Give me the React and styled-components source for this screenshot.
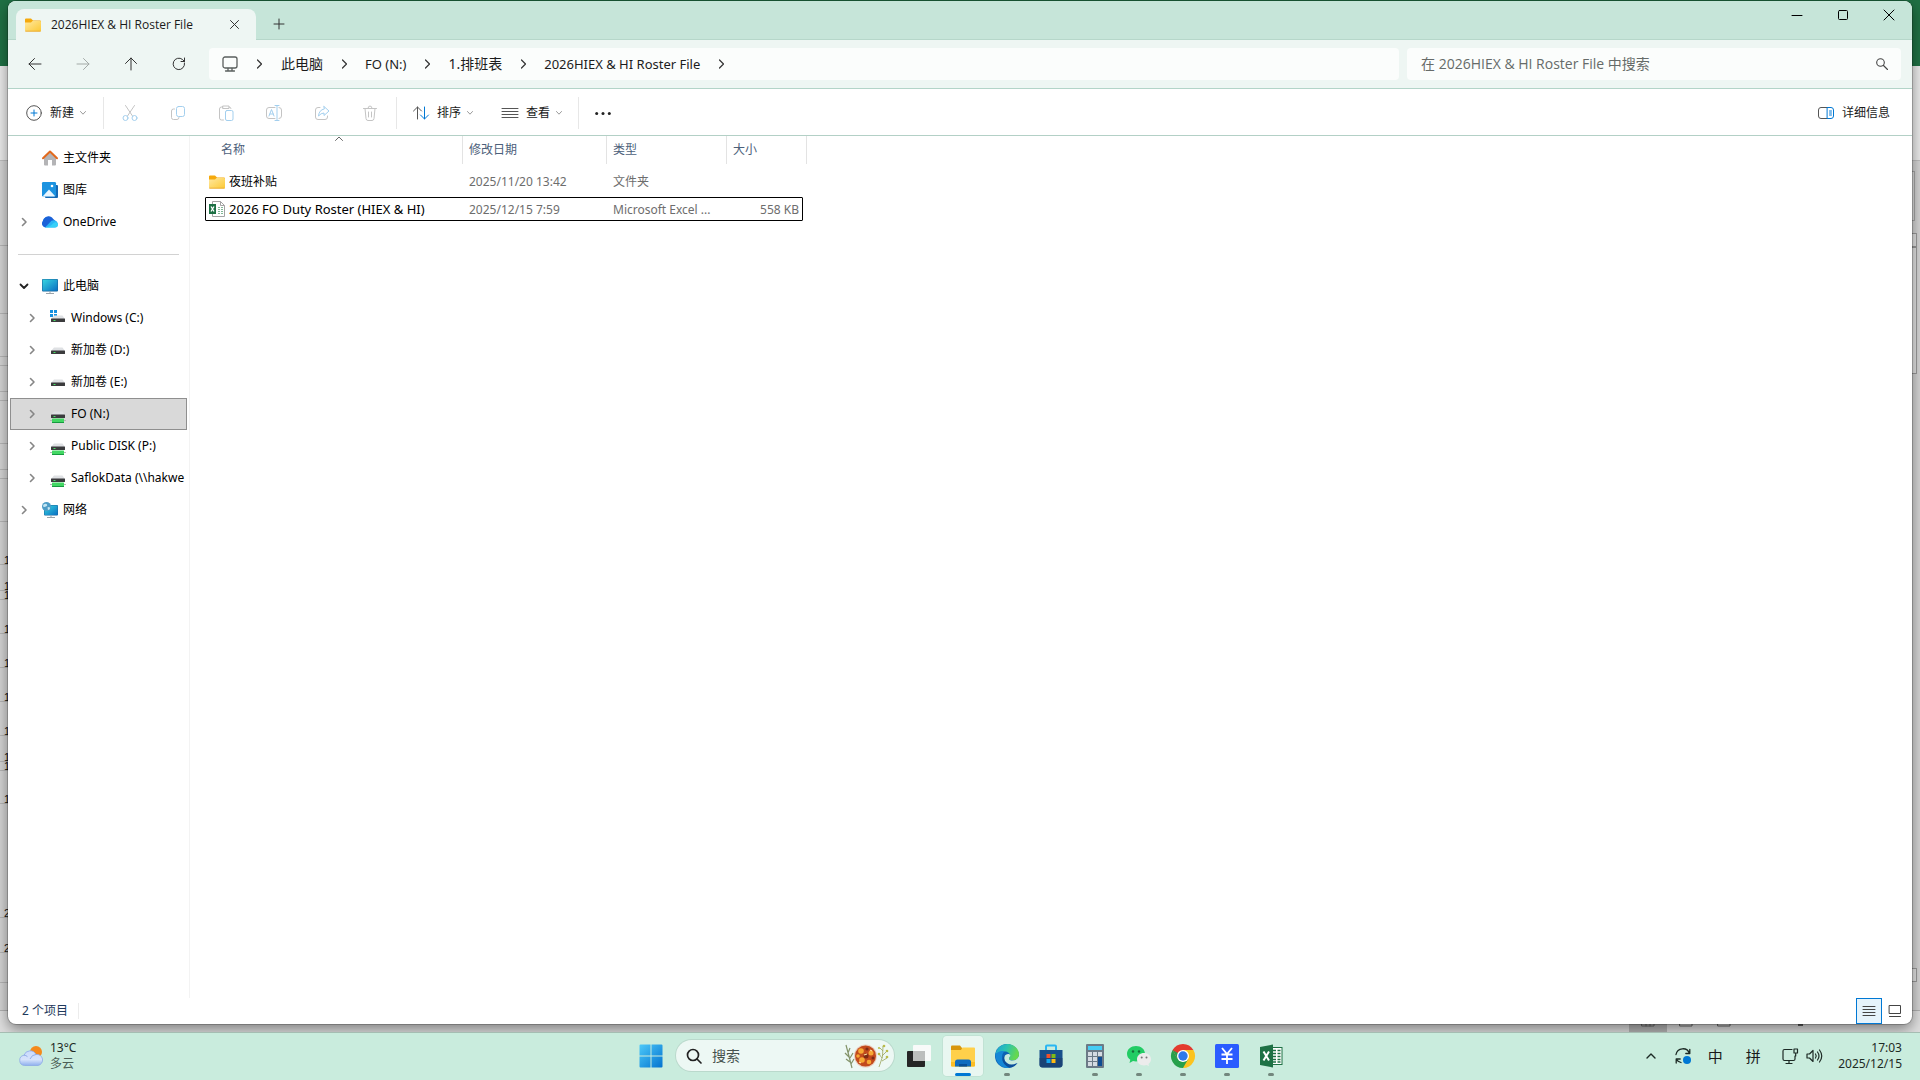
import React from "react";
import styled, { createGlobalStyle, css } from "styled-components";

const GlobalStyle = createGlobalStyle`
  *, *::before, *::after { box-sizing: border-box; }
  html, body { margin: 0; padding: 0; }
  body {
    font-family: "Noto Sans", "Noto Sans CJK SC", sans-serif;
    font-size: 12px;
    line-height: 16px;
    color: #1a1a1a;
    overflow: hidden;
  }
  button, input { font: inherit; color: inherit; }
  ul { list-style: none; margin: 0; padding: 0; }
`;

const plainButton = css`
  appearance: none;
  border: 0;
  padding: 0;
  margin: 0;
  background: transparent;
  display: flex;
  align-items: center;
  justify-content: center;
  flex: none;
`;

const Svg = styled.svg`
  display: block;
  flex: none;
  overflow: visible;
`;

/* ---------- Desktop and the window behind ---------- */

const Desktop = styled.div`
  height: 100vh;
  display: flex;
  flex-direction: column;
  overflow: hidden;
`;

const Stage = styled.main`
  position: relative;
  flex: 1;
  min-height: 0;
  display: flex;
  padding: 1px 8px 8px;
  overflow: hidden;
`;

const Backdrop = styled.div`
  position: absolute;
  inset: 0;
  display: grid;
  grid-template-rows: 66px 95px 1fr 22px;
  background: #d0d0d0;
`;

const BackTitle = styled.div`
  background: #1f7044;
`;

const BackRibbon = styled.div`
  background: #e9e9e9;
  border-bottom: 1px solid #bdbdbd;
`;

const BackSheet = styled.div`
  display: flex;
  justify-content: space-between;
  overflow: hidden;
  background: #d3d3d3;
`;

const RowHeads = styled.div`
  width: 20px;
  font-family: "Liberation Sans", sans-serif;
  font-size: 11px;
  line-height: 8px;
  color: #111;
`;

const RowHead = styled.div`
  height: ${(p) => p.$h}px;
  border-bottom: 1px solid #b4b4b4;
  padding-left: 4px;
  display: flex;
  align-items: flex-end;
`;

const BackScroll = styled.div`
  width: 20px;
  padding: 10px 3px 28px 0;
  display: flex;
  flex-direction: column;
`;

const FormulaEnd = styled.div`
  height: 50px;
  margin: 0 2px 12px 0;
  border: 1px solid #a8a8a8;
  background: #dcdcdc;
`;

const ScrollPart = styled.div`
  height: ${(p) => p.$h}px;
  border: 1px solid #9a9a9a;
  background: #e2e2e2;
`;

const ScrollGap = styled.div`
  flex: 1;
`;

const BackStatus = styled.div`
  display: flex;
  align-items: stretch;
  justify-content: flex-end;
  padding-right: 117px;
  border-top: 1px solid #b0b0b0;
  background: #dedede;
`;

const BackView = styled.div`
  width: 38px;
  padding-top: 2px;
  display: flex;
  justify-content: center;
  background: ${(p) => (p.$on ? "#b4b4b4" : "transparent")};
`;

const BackSlider = styled.div`
  width: 5px;
  height: 15px;
  margin-left: 55px;
  background: #5c5c5c;
`;

/* ---------- Explorer window ---------- */

const Window = styled.section`
  position: relative;
  flex: 1;
  min-width: 0;
  display: flex;
  flex-direction: column;
  border-radius: 8px;
  background: #fff;
  overflow: hidden;
  box-shadow: 0 0 0 1px rgba(0, 0, 0, 0.2), 0 5px 14px rgba(0, 0, 0, 0.44);
`;

const TitleBar = styled.header`
  height: 39px;
  flex: none;
  display: flex;
  align-items: flex-start;
  padding-left: 8px;
  background: #c6e5d9;
  border-bottom: 1px solid #b6d7ca;
`;

const Tab = styled.div`
  position: relative;
  width: 240px;
  height: 31px;
  margin: 8px 0 -1px;
  padding: 0 12px 0 9px;
  display: flex;
  align-items: center;
  gap: 10px;
  border-radius: 8px 8px 0 0;
  background: #eef6f3;
  font-family: "Open Sans", "Noto Sans CJK SC", sans-serif;
  font-weight: 500;
`;

const TabTitle = styled.span`
  flex: 1;
  white-space: nowrap;
`;

const IconButton = styled.button`
  ${plainButton}
  width: ${(p) => p.$w}px;
  height: ${(p) => p.$h}px;
`;

const NewTab = styled.div`
  flex: 1;
  padding: 8px 0 0 7px;
`;

const Captions = styled.div`
  display: flex;
`;

const NavBar = styled.nav`
  height: 49px;
  flex: none;
  display: grid;
  grid-template-columns: auto 1fr 494px;
  align-items: center;
  padding: 0 11px 0 3px;
  column-gap: 8px;
  background: #eef6f3;
  border-bottom: 1px solid #b3d4c8;
`;

const NavButtons = styled.div`
  display: flex;
  margin-right: -2px;
`;

const fieldBox = css`
  height: 32px;
  display: flex;
  align-items: center;
  border-radius: 4px;
  background: #fbfdfc;
`;

const Address = styled.ol`
  ${fieldBox}
  list-style: none;
  margin: 0;
  padding: 0 13px;
`;

const Crumb = styled.li`
  display: flex;
  align-items: center;
  &:first-child { padding-right: 1px; }
`;

const CrumbLink = styled.a`
  color: #1c1c1c;
  text-decoration: none;
  white-space: nowrap;
  line-height: 20px;
  font-size: ${(p) => (p.$cjk ? 14 : 13)}px;
`;

const CrumbArrow = styled.span`
  width: 42px;
  display: flex;
  justify-content: center;
`;

const SearchField = styled.label`
  ${fieldBox}
  padding: 0 11px 0 14px;
`;

const SearchInput = styled.input`
  flex: 1;
  min-width: 0;
  border: 0;
  padding: 0;
  outline: 0;
  background: transparent;
  font-family: "Open Sans", "Noto Sans CJK SC", sans-serif;
  font-size: 14px;
  line-height: 20px;
  &::placeholder { color: #666b69; opacity: 1; }
`;

const Toolbar = styled.div`
  height: 47px;
  flex: none;
  display: flex;
  align-items: center;
  padding: 2px 22px 0 16px;
  background: #fff;
  border-bottom: 1px solid #b3d0c6;
`;

const ToolGroup = styled.div`
  display: flex;
  align-items: center;
  height: 32px;
  padding: ${(p) => p.$pad || "0"};
  gap: ${(p) => p.$gap || 0}px;
  border-right: ${(p) => (p.$last ? 0 : 1)}px solid #e7e7e7;
`;

const ToolButton = styled.button`
  ${plainButton}
  height: 32px;
  gap: ${(p) => (p.$menu ? 6 : 8)}px;
  white-space: nowrap;
`;

const ToolText = styled.span`
  padding-left: 2px;
`;

const ToolSpacer = styled.div`
  flex: 1;
`;

const Content = styled.div`
  flex: 1;
  min-height: 0;
  display: flex;
`;

const Sidebar = styled.aside`
  width: 182px;
  flex: none;
  padding: 6px 2px 0;
  border-right: 1px solid #f3f3f3;
  overflow: hidden;
`;

const TreeItem = styled.button`
  ${plainButton}
  justify-content: flex-start;
  width: 177px;
  height: 32px;
  padding-left: ${(p) => (p.$level ? 14 : 6)}px;
  border: 1px solid ${(p) => (p.$selected ? "#8f8f8f" : "transparent")};
  background: ${(p) => (p.$selected ? "#d9d9d9" : "transparent")};
  color: #000;
  overflow: hidden;
`;

const TreeArrow = styled.span`
  width: 13px;
  margin-right: 12px;
  flex: none;
  display: flex;
  justify-content: center;
`;

const TreeLabel = styled.span`
  margin-left: 5px;
  white-space: nowrap;
`;

const TreeRule = styled.div`
  height: 32px;
  display: flex;
  align-items: center;
  padding: 0 8px;
  &::after {
    content: "";
    width: 161px;
    border-top: 1px solid #d2d2d2;
  }
`;

const FileArea = styled.div`
  flex: 1;
  padding-left: 15px;
`;

const Table = styled.table`
  display: block;
`;

const THead = styled.thead`
  display: block;
  margin-bottom: 5px;
`;

const TBody = styled.tbody`
  display: flex;
  flex-direction: column;
  gap: 4px;
`;

const HeadRow = styled.tr`
  display: grid;
  width: 602px;
  grid-template-columns: 258px 144px 120px 80px;
`;

const HeadCell = styled.th`
  position: relative;
  height: 28px;
  padding: 6px 0 0 ${(p) => (p.$first ? 16 : 6)}px;
  border-right: 1px solid #e3e3e3;
  text-align: left;
  font-weight: 400;
  color: #4c607a;
`;

const SortMark = styled.span`
  position: absolute;
  top: 0;
  left: 50%;
`;

const FileRow = styled.tr`
  display: grid;
  width: 598px;
  height: 24px;
  grid-template-columns: 258px 144px 120px 1fr;
  align-items: center;
  color: #6d6d6d;
  border-radius: 1px;
  outline: ${(p) => (p.$focused ? "1px solid #000" : "none")};
  outline-offset: -1px;
`;

const Cell = styled.td`
  padding: 2px 4px 0 6px;
  white-space: nowrap;
  text-align: ${(p) => (p.$right ? "right" : "left")};
`;

const NameCell = styled.td`
  padding: ${(p) => (p.$cjk ? 2 : 0)}px 0 0 4px;
  display: flex;
  align-items: center;
  gap: 4px;
  color: #000;
  white-space: nowrap;
  font-size: ${(p) => (p.$cjk ? 12 : 13)}px;
`;

const StatusBar = styled.footer`
  height: 26px;
  flex: none;
  display: flex;
  align-items: center;
  padding: 0 4px 0 14px;
  color: #1e395b;
`;

const StatusText = styled.span`
  flex: none;
  padding-right: 10px;
  border-right: 1px solid #ececec;
`;

const ViewButton = styled.button`
  ${plainButton}
  width: 26px;
  height: 26px;
  border: 1px solid ${(p) => (p.$on ? "#0078d4" : "transparent")};
  background: ${(p) => (p.$on ? "#e5f3fb" : "transparent")};
`;

/* ---------- Taskbar ---------- */

const Taskbar = styled.footer`
  height: 48px;
  flex: none;
  display: grid;
  grid-template-columns: 1fr auto 1fr;
  align-items: center;
  padding-bottom: 2px;
  background: #c9ecdd;
  border-top: 1px solid #a5bdb2;
`;

const Weather = styled.button`
  ${plainButton}
  justify-self: start;
  margin-left: 18px;
  gap: 6px;
  text-align: left;
`;

const Stacked = styled.span`
  display: flex;
  flex-direction: column;
  color: #1d2a25;
`;

const Muted = styled.span`
  color: #4d5f57;
`;

const Apps = styled.div`
  display: flex;
  align-items: center;
  gap: 4px;
  padding-left: 2px;
`;

const TaskButton = styled.button`
  ${plainButton}
  position: relative;
  width: 40px;
  height: 40px;
  border-radius: 4px;
  background: ${(p) => (p.$active ? "rgba(255,255,255,0.6)" : "transparent")};
  box-shadow: ${(p) => (p.$active ? "0 0 0 1px rgba(0,0,0,0.04)" : "none")};
  &::after {
    content: "";
    position: absolute;
    left: 50%;
    bottom: 0;
    height: 3px;
    border-radius: 2px;
    transform: translateX(-50%);
    width: ${(p) => (p.$active ? 16 : p.$running ? 6 : 0)}px;
    background: ${(p) => (p.$active ? "#0078d4" : "#72877d")};
  }
`;

const TaskSearch = styled.label`
  width: 218px;
  height: 31px;
  margin: 0 1px;
  padding: 0 4px 0 10px;
  display: flex;
  align-items: center;
  gap: 10px;
  border-radius: 16px;
  background: #edf8f4;
  box-shadow: 0 0 0 1px #bad9cc;
`;

const TaskSearchInput = styled.input`
  flex: 1;
  min-width: 0;
  border: 0;
  padding: 0;
  outline: 0;
  background: transparent;
  font-size: 14px;
  line-height: 20px;
  &::placeholder { color: #46524d; opacity: 1; }
`;

const Tray = styled.div`
  justify-self: end;
  display: flex;
  align-items: center;
  padding-right: 18px;
  font-size: 15px;
`;

const TrayButton = styled.button`
  ${plainButton}
  width: ${(p) => p.$w}px;
  height: 40px;
  gap: 8px;
`;

const Clock = styled.button`
  ${plainButton}
  margin-left: 9px;
  text-align: right;
  font-size: 12px;
`;

/* ---------- Icons ---------- */

const Line = ({ w = 16, h = w, vb = `0 0 ${w} ${h}`, c = "#333", sw = 1, d, children }) => (
  <Svg width={w} height={h} viewBox={vb} fill="none" stroke={c} strokeWidth={sw} strokeLinecap="round" strokeLinejoin="round" aria-hidden="true">
    {d && <path d={d} />}
    {children}
  </Svg>
);

const Chevron = ({ dir = "right", c = "#333", sw = 1.2 }) => {
  const d = { right: "M3.500 1 7.500 5 3.500 9", down: "M1 3 5 7 9 3", up: "M1 7 5 3 9 7" }[dir];
  return <Line w={10} c={c} sw={sw} d={d} />;
};

const TreeChevron = ({ dir }) =>
  dir === "down"
    ? <Line w={10} c="#222" sw={1.800} d="M1.500 3.500 5 7 8.500 3.500" />
    : <Line w={10} c="#868686" sw={1.600} d="M3.500 1.500 7 5 3.500 8.500" />;

const SmallDown = () => <Line w={6} h={6} c="#9a9a9a" d="M.5 1.500 3 4.200 5.500 1.500" />;

const FolderIcon = () => (
  <Svg width="16" height="14" viewBox="0 0 16 14" aria-hidden="true">
    <defs>
      <linearGradient id="fold" x1="0" y1="0" x2="1" y2="1">
        <stop offset="0" stopColor="#ffe8a0" />
        <stop offset="1" stopColor="#fcc934" />
      </linearGradient>
    </defs>
    <path d="M0 1.500Q0 .5 1 .5h5L8 2.500h7Q16 2.500 16 3.500V8H0Z" fill="#f5a90c" />
    <path d="M0 4.500h6L7.500 3H15Q16 3 16 4v8.500Q16 13.500 15 13.500H1Q0 13.500 0 12.500Z" fill="url(#fold)" />
    <path d="M.3 13.200h15.400" stroke="#e8a52c" strokeWidth=".8" />
  </Svg>
);

const ExcelFileIcon = () => (
  <Svg width="16" height="16" viewBox="0 0 16 16" aria-hidden="true">
    <path d="M3.500.5h8L15.500 4.500v11h-12Z" fill="#fff" stroke="#a3a3a3" />
    <path d="M11.500.5v4h4" fill="none" stroke="#a3a3a3" />
    <path d="M9 6.500h2M12 6.500h2M9 8.500h2M12 8.500h2M9 10.500h2M12 10.500h2M9 12.500h2M12 12.500h2" stroke="#7fb795" />
    <path d="M0 3h7v10H0Z" fill="#1d7044" />
    <path d="m2 5.500 3 5M5 5.500l-3 5" stroke="#fff" strokeWidth="1.300" />
  </Svg>
);

const HomeIcon = () => (
  <Svg width="16" height="16" viewBox="0 0 16 16" aria-hidden="true">
    <path d="M2 7.500 8 2l6 5.500V14.500Q14 15.500 13 15.500h-3V10H6v5.500H3Q2 15.500 2 14.500Z" fill="#b4b4b6" />
    <path d="M1 8.200 8 1.500l7 6.700" fill="none" stroke="#e2691c" strokeWidth="2" strokeLinecap="round" strokeLinejoin="round" />
  </Svg>
);

const GalleryIcon = () => (
  <Svg width="16" height="16" viewBox="0 0 16 16" aria-hidden="true">
    <path d="M3 3h12q1 0 1 1v11q0 1-1 1H4q-1 0-1-1Z" fill="#1568b3" />
    <rect width="14" height="14.500" rx="1.200" fill="#1c93e0" />
    <path d="M1 14 7 7.500l6 6.500Q12.500 14.500 12 14.500H2Q1.300 14.500 1 14Z" fill="#e9f6ff" />
    <circle cx="10" cy="4" r="1.300" fill="#fff" />
  </Svg>
);

const OneDriveIcon = () => (
  <Svg width="16" height="16" viewBox="0 0 16 16" aria-hidden="true">
    <path d="M4 13.500A4 4 0 0 1 .7 7.500 5.500 5.500 0 0 1 10.500 5Z" fill="#1475e0" />
    <path d="M2.500 4.500A5 5 0 0 1 11 4.700L14.500 8 8 11 3 13.300A3.800 3.800 0 0 1 .8 7.200Z" fill="#1b62d8" />
    <path d="M3 13.400 9.500 6.800A4.200 4.200 0 0 1 15.700 9q1 4.500-3.200 4.500H4Z" fill="#2bb4f5" />
    <path d="M3 13.300Q8 13 10.500 10T15.800 9.500q.6 4-3.300 4H4Z" fill="#37d0f8" />
  </Svg>
);

const Monitor = () => (
  <Svg width="16" height="16" viewBox="0 0 16 16" aria-hidden="true">
    <defs>
      <linearGradient id="mon" x1="0" y1="0" x2="1" y2="1">
        <stop offset="0" stopColor="#37d5e0" />
        <stop offset="1" stopColor="#0a6fc2" />
      </linearGradient>
    </defs>
    <rect y="1" width="16" height="12.500" rx="1" fill="#19669e" />
    <rect x=".6" y="1.600" width="14.800" height="11.200" rx=".5" fill="url(#mon)" />
    <path d="M4 15.500h8M8 13.500v2" stroke="#9aa3aa" />
  </Svg>
);

const NetworkIcon = () => (
  <Svg width="16" height="16" viewBox="0 0 16 16" aria-hidden="true">
    <rect x="2" y="3" width="14" height="10.500" rx="1" fill="#19669e" />
    <rect x="2.500" y="3.500" width="13" height="9.500" fill="url(#mon)" />
    <path d="M5 15.500h8M9 13.500v2" stroke="#9aa3aa" />
    <circle cx="4.500" cy="4.500" r="4.500" fill="#4d9cc6" />
    <path d="M1.500 2.500Q4 1 5 2.500T2.500 5Q1 5 1 4ZM5.500 5.500q2-1 2.500.5T6 8Z" fill="#c5e6f2" />
  </Svg>
);

const DriveIcon = ({ kind }) => (
  <Svg width="16" height="16" viewBox="0 0 16 16" aria-hidden="true">
    {kind === "win" && <path d="M0 0h3v3H0ZM4 0h3v3H4ZM0 4h3v3H0ZM4 4h3v3H4Z" fill="#1590e0" />}
    <path d="M4 5.500h8.500L15 9H1Z" fill="#dfe1e4" />
    <rect x="1" y="8.500" width="14" height="3.500" rx=".5" fill="#3b3b3d" />
    <path d="M3.500 10.500h2" stroke="#47e065" />
    {kind === "net" && (
      <>
        <path d="M0 14.500h16" stroke="#b6b6b6" />
        <rect x="2" y="12.500" width="12" height="4" rx=".5" fill="#42d763" />
        <path d="M2 16.500h12" stroke="#169a3f" />
      </>
    )}
  </Svg>
);

const Food = () => (
  <Svg width="48" height="28" viewBox="0 0 48 28" aria-hidden="true">
    <path d="M10 26Q7 14 4 3M7 15 3 11M8 20l-4-3M6 11 8 6M8 16l3-5M9 22l3-5" stroke="#84946a" strokeWidth="1.200" fill="none" />
    <path d="M37 25Q42 15 41 4M40 19l5-3M40 14l5-5M40 16l-3-4M41 9l-3-3" stroke="#9aa35c" strokeWidth=".8" fill="none" />
    <g fill="#b9bb4a"><circle cx="45" cy="15" r="1.300" /><circle cx="45" cy="9" r="1.300" /><circle cx="37" cy="12" r="1.300" /><circle cx="42" cy="4" r="1.300" /><circle cx="37" cy="6" r="1.100" /></g>
    <circle cx="23.500" cy="14" r="11.500" fill="#e9cfc0" />
    <circle cx="23.500" cy="14" r="10.500" fill="#c24a1d" />
    <g fill="#f7a834"><circle cx="19" cy="9" r="2.800" /><circle cx="29" cy="11" r="2.500" /><circle cx="20" cy="18" r="2.800" /><circle cx="27" cy="20" r="2.300" /><circle cx="16" cy="14" r="1.800" /></g>
    <g fill="#7e2a14"><circle cx="24" cy="14" r="2.500" /><circle cx="25" cy="7" r="1.600" /><circle cx="31" cy="16" r="1.500" /></g>
    <path d="M22 13l3-1M28 8l2 1M17 20l2 1" stroke="#ffe09a" strokeWidth="1.300" />
  </Svg>
);

const StartIcon = () => (
  <Svg width="24" height="24" viewBox="0 0 24 24" aria-hidden="true">
    <defs>
      <linearGradient id="win" x1="0" y1="0" x2="1" y2="1">
        <stop offset="0" stopColor="#4cc9f9" />
        <stop offset="1" stopColor="#0473cf" />
      </linearGradient>
    </defs>
    <path d="M.5 1.500Q.5.500 1.500.500H11.500V11.500H.5ZM12.500.5h10q1 0 1 1v10h-11ZM.5 12.500h11v11h-10q-1 0-1-1ZM12.500 12.500h11v10q0 1-1 1h-10Z" fill="url(#win)" />
  </Svg>
);

const TaskViewIcon = () => (
  <Svg width="24" height="24" viewBox="0 0 24 24" aria-hidden="true">
    <rect x="0" y="7" width="18" height="16" rx="1" fill="#252525" />
    <rect x="6" y="1" width="18" height="16" rx="1" fill="#f8faf9" />
    <path d="M6 7h12v10H6Z" fill="#bcbebd" />
  </Svg>
);

const ExplorerIcon = () => (
  <Svg width="24" height="24" viewBox="0 0 24 24" aria-hidden="true">
    <path d="M0 2.500Q0 1.500 1 1.500h8l2 2.500v2H0Z" fill="#d8960c" />
    <path d="M0 6h10l1.500-2.500H23q1 0 1 1V21.500q0 1-1 1H1q-1 0-1-1Z" fill="#ffd04a" />
    <path d="M0 18h24v3.500q0 1-1 1H1q-1 0-1-1Z" fill="#fbbd25" />
    <path d="M4 22.500V18q0-2.500 2.500-2.500h11Q20 15.500 20 18v4.500Z" fill="#0f6cbf" />
    <path d="M8 22.500v-2.500h8v2.500" fill="#084f97" />
  </Svg>
);

const EdgeIcon = () => (
  <Svg width="24" height="24" viewBox="0 0 24 24" aria-hidden="true">
    <defs>
      <linearGradient id="edgeTop" x1="0" y1="0" x2="1" y2=".3">
        <stop offset="0" stopColor="#1b9fdc" />
        <stop offset=".5" stopColor="#2bc3b0" />
        <stop offset="1" stopColor="#66d84e" />
      </linearGradient>
    </defs>
    <circle cx="12" cy="12" r="12" fill="#0d63b4" />
    <path d="M.2 10.500A12 12 0 0 1 12 0c7 0 12 5 12 10.500 0 3.500-2.800 6-6.200 6-2.300 0-3.800-.8-3.800-2 0-.8 1-1.200 1-3 0-2.200-2.300-4-5.200-4-4 0-7.500 1.500-9.600 3Z" fill="url(#edgeTop)" />
    <path d="M.2 10.500Q4 6 9.500 7.200 6.500 10 7 14.500T14.500 23.700Q12 24 10 23.800 1 21.500.2 10.500Z" fill="#1587d6" />
    <path d="M9.500 11.500q-1.500 5 2.500 7.500t10.500 0Q20 23 14.500 23.700 8 21 7.500 16 7.500 13 9.500 11.500Z" fill="#0c4f9c" />
    <path d="M14 14.500q0 2 3.800 2 4.200 0 6.200-4.500v5l-2 2q-6 3-10 0T10 11.500q1.500-2 4-1.500 2 .8 1 2.500-1 1-1 2Z" fill="#c9ecdd" />
  </Svg>
);

const StoreIcon = () => (
  <Svg width="24" height="24" viewBox="0 0 24 24" aria-hidden="true">
    <path d="M7 7V2.500Q7 1.500 8 1.500h8q1 0 1 1V7" fill="none" stroke="#29b6f2" strokeWidth="2" />
    <path d="M.5 6h23v14.500q0 3-3 3h-17q-3 0-3-3Z" fill="#174f8b" />
    <path d="M.5 14h23v6.500q0 3-3 3h-17q-3 0-3-3Z" fill="#1c3f6e" opacity=".7" />
    <path d="M7.500 10h4v4h-4Z" fill="#f2502a" /><path d="M12.500 10h4v4h-4Z" fill="#7fba16" />
    <path d="M7.500 15h4v4h-4Z" fill="#16a5ee" /><path d="M12.500 15h4v4h-4Z" fill="#fdb913" />
  </Svg>
);

const CalcIcon = () => (
  <Svg width="18" height="24" viewBox="0 0 18 24" aria-hidden="true">
    <rect width="18" height="24" rx="1" fill="#6c7a86" />
    <rect x="2" y="2" width="14" height="4" fill="#45cdf5" />
    <path d="M2 8h4v4H2ZM7 8h4v4H7ZM12 8h4v4h-4ZM2 13h4v4H2ZM7 13h4v4H7ZM2 18h4v4H2ZM7 18h4v4H7Z" fill="#d5dbe2" />
    <path d="M12 13h4v9h-4Z" fill="#0f4c92" />
  </Svg>
);

const WeChatIcon = () => (
  <Svg width="24" height="24" viewBox="0 0 24 24" aria-hidden="true">
    <path d="M9 2c5 0 9 3.400 9 7.700s-4 7.700-9 7.700q-1.500 0-3-.4L2.500 19l.8-3.300Q0 13.500 0 9.700C0 5.400 4 2 9 2Z" fill="#22cc64" />
    <circle cx="6" cy="7.500" r="1.200" fill="#156c38" /><circle cx="12" cy="7.500" r="1.200" fill="#156c38" />
    <path d="M17 9c4 0 7 2.700 7 6.200 0 2-1 3.700-2.500 4.800l.5 2-2.500-1Q18.500 21.400 17 21.400c-4 0-7-2.700-7-6.200S13 9 17 9Z" fill="#ececec" />
    <circle cx="14.700" cy="13.500" r="1" fill="#777" /><circle cx="19.500" cy="13.500" r="1" fill="#777" />
  </Svg>
);

const ChromeIcon = () => (
  <Svg width="24" height="24" viewBox="0 0 24 24" aria-hidden="true">
    <path d="M12 12 1.600 6A12 12 0 0 1 22.400 6Z" fill="#e33b2e" />
    <path d="M12 12V6h10.400A12 12 0 0 1 12 24Z" fill="#fcc31e" />
    <path d="M1.600 6 6.800 15 12 18l5.200-3L12 24A12 12 0 0 1 1.600 6Z" fill="#27a04b" />
    <path d="M1.600 6H12v6L6.800 15Z" fill="#e33b2e" />
    <path d="M1.600 6 6.800 15 12 12Z" fill="#27a04b" />
    <circle cx="12" cy="12" r="6" fill="#fff" />
    <circle cx="12" cy="12" r="4.700" fill="#2f78ea" />
  </Svg>
);

const YenIcon = () => (
  <Svg width="24" height="24" viewBox="0 0 24 24" aria-hidden="true">
    <rect width="24" height="24" rx="1.500" fill="#2b5cff" />
    <path d="M7 4l5 6 5-6M6.500 10.500h11M6.500 15h11M12 10v10" fill="none" stroke="#fff" strokeWidth="1.800" />
  </Svg>
);

const ExcelIcon = () => (
  <Svg width="24" height="24" viewBox="0 0 24 24" aria-hidden="true">
    <rect x="12.500" y="3.500" width="10.500" height="17" fill="#fff" stroke="#1e7145" />
    <path d="M14 6.500h3M18.500 6.500h3M14 9.500h3M18.500 9.500h3M14 12.500h3M18.500 12.500h3M14 15.500h3M18.500 15.500h3M14 18h3M18.500 18h3" stroke="#1e7145" strokeWidth="1.400" />
    <path d="M1 3 14 .5v23L1 21Z" fill="#1e7145" />
    <path d="m4.500 7.500 5.500 9M10 7.500l-5.500 9" stroke="#fff" strokeWidth="2" />
  </Svg>
);

const WeatherIcon = () => (
  <Svg width="26" height="24" viewBox="0 0 26 24" aria-hidden="true">
    <defs>
      <linearGradient id="cloud" x1="0" y1="0" x2="0" y2="1">
        <stop offset="0" stopColor="#c9dafc" />
        <stop offset=".6" stopColor="#d6e3fb" />
        <stop offset="1" stopColor="#8fb0ee" />
      </linearGradient>
    </defs>
    <circle cx="18" cy="8" r="6" fill="#f58a1b" />
    <path d="M6.500 21.500a5.200 5.200 0 0 1-.5-10.300A6.500 6.500 0 0 1 18 10.500a5.500 5.500 0 0 1 2 11Z" fill="url(#cloud)" stroke="#8daae6" strokeWidth=".8" />
    <path d="M6 11.200q2 0 3.500 1.500M12 15q2-4.500 6-4.500" fill="none" stroke="#7f9fe0" strokeWidth=".8" />
  </Svg>
);

/* ---------- Data ---------- */

const backRows = [
  [85], [68], [43], [9], [26], [9], [43], [26], [9], [43],
  [43, "1"], [26, "1"], [9, "1"], [34, "1"], [34, "1"], [34, "1"], [34, "1"], [26, "1"], [9, "1"], [33, "1"],
  [114, "2"], [35, "2"], [30],
];

const crumbs = [
  { text: "此电脑", cjk: true },
  { text: "FO (N:)" },
  { text: "1.排班表", cjk: true },
  { text: "2026HIEX & HI Roster File" },
];

const quickItems = [
  { text: "主文件夹", icon: <HomeIcon /> },
  { text: "图库", icon: <GalleryIcon /> },
  { text: "OneDrive", icon: <OneDriveIcon />, arrow: "right" },
];

const treeItems = [
  { text: "此电脑", icon: <Monitor />, arrow: "down" },
  { text: "Windows (C:)", icon: <DriveIcon kind="win" />, arrow: "right", level: 1 },
  { text: "新加卷 (D:)", icon: <DriveIcon />, arrow: "right", level: 1 },
  { text: "新加卷 (E:)", icon: <DriveIcon />, arrow: "right", level: 1 },
  { text: "FO (N:)", icon: <DriveIcon kind="net" />, arrow: "right", level: 1, selected: true },
  { text: "Public DISK (P:)", icon: <DriveIcon kind="net" />, arrow: "right", level: 1 },
  { text: "SaflokData (\\\\hakwe", icon: <DriveIcon kind="net" />, arrow: "right", level: 1 },
  { text: "网络", icon: <NetworkIcon />, arrow: "right" },
];

const files = [
  { name: "夜班补贴", cjk: true, icon: <FolderIcon />, date: "2025/11/20 13:42", type: "文件夹", size: "" },
  { name: "2026 FO Duty Roster (HIEX & HI)", icon: <ExcelFileIcon />, date: "2025/12/15 7:59", type: "Microsoft Excel ...", size: "558 KB", focused: true },
];

const G = "#c4c4c4";
const B = "#a3cfee";

const disabledTools = [
  ["剪切", <Line c={G} key="i"><path d="M3.500.5 10.500 11M12.500.5 5.500 11" /><g stroke={B}><circle cx="3.500" cy="13" r="2.500" /><circle cx="12.500" cy="13" r="2.500" /></g></Line>],
  ["复制", <Line c={G} key="i"><path d="M4.500 4H3.500Q1.500 4 1.500 6v6.500q0 2 2 2H7q2 0 2-2" /><rect x="6.500" y="1.500" width="8" height="10" rx="2" stroke={B} /></Line>],
  ["粘贴", <Line c={G} key="i"><path d="M5.500 15H3.500Q1.500 15 1.500 13V4q0-2 2-2H5M11 2q2 0 2 1.500M5 1h6v2.500H5Z" /><rect x="7.500" y="5.500" width="7.500" height="10" rx="1.500" stroke={B} /></Line>],
  ["重命名", <Line c={G} key="i"><path d="M9 2.500H3Q.5 2.500.5 5v6q0 2.500 2.500 2.500H9M13 2.500q2.500 0 2.500 2.500v6q0 2.500-2.500 2.500" /><path stroke={B} d="M9 .5h4M9 15.500h4M11 .5v15M3 11l2.500-6.500L8 11M4 9h3.200" /></Line>],
  ["共享", <Line c={G} key="i"><path d="M6 2.500H4Q1.500 2.500 1.500 5v7q0 2.500 2.500 2.500h7q2.500 0 2.500-2.500v-1" /><path stroke={B} d="M10 1.500 15 6l-5 4.500V8Q7 8 4.500 11 5 5 10 4Z" /></Line>],
  ["删除", <Line c={G} key="i" d="M1.500 3.500h13M6 3.500Q6 1 8 1t2 2.500M3 3.500 4 13.500q.2 2 2 2h4q1.800 0 2-2l1-10M6.500 7v5M9.500 7v5" />],
];

const apps = [
  ["任务视图", <TaskViewIcon key="i" />],
  ["文件资源管理器", <ExplorerIcon key="i" />, "active"],
  ["Edge", <EdgeIcon key="i" />, "running"],
  ["Store", <StoreIcon key="i" />],
  ["计算器", <CalcIcon key="i" />, "running"],
  ["微信", <WeChatIcon key="i" />, "running"],
  ["Chrome", <ChromeIcon key="i" />, "running"],
  ["收银", <YenIcon key="i" />, "running"],
  ["Excel", <ExcelIcon key="i" />, "running"],
];

/* ---------- Parts ---------- */

const Tree = ({ items }) =>
  items.map((it) => (
    <li key={it.text}>
      <TreeItem $level={it.level} $selected={it.selected}>
        <TreeArrow>{it.arrow && <TreeChevron dir={it.arrow} />}</TreeArrow>
        {it.icon}
        <TreeLabel>{it.text}</TreeLabel>
      </TreeItem>
    </li>
  ));

export default function App() {
  return (
    <Desktop>
      <GlobalStyle />
      <Stage>
        <Backdrop aria-hidden="true">
          <BackTitle />
          <BackRibbon />
          <BackSheet>
            <RowHeads>
              {backRows.map(([h, n], i) => (
                <RowHead key={i} $h={h}>{n}</RowHead>
              ))}
            </RowHeads>
            <BackScroll>
              <FormulaEnd />
              <ScrollPart $h={14} />
              <ScrollPart $h={127} />
              <ScrollGap />
              <ScrollPart $h={14} />
            </BackScroll>
          </BackSheet>
          <BackStatus>
            <BackView $on><Line w={14} h={14} c="#666" d="M1 1h12v12H1ZM5 1v12M9 1v12M1 5h12M1 9h12" /></BackView>
            <BackView><Line w={14} h={14} c="#666" d="M1 1h12v12H1ZM4 4h6v6H4Z" /></BackView>
            <BackView><Line w={14} h={14} c="#666" d="M1 1h12v12H1Z" /></BackView>
            <BackSlider />
          </BackStatus>
        </Backdrop>

        <Window>
          <TitleBar>
            <Tab>
              <FolderIcon />
              <TabTitle>2026HIEX &amp; HI Roster File</TabTitle>
              <IconButton $w={20} $h={20} aria-label="关闭标签页">
                <Line w={9} d="M.5.5l8 8M8.500.5l-8 8" />
              </IconButton>
            </Tab>
            <NewTab>
              <IconButton $w={32} $h={30} aria-label="新标签页">
                <Line w={10} d="M5 0v10M0 5h10" />
              </IconButton>
            </NewTab>
            <Captions>
              <IconButton $w={46} $h={28} aria-label="最小化"><Line w={10} c="#000" d="M0 5.500h10" /></IconButton>
              <IconButton $w={46} $h={28} aria-label="最大化"><Line w={10} c="#000"><rect x=".5" y=".5" width="9" height="9" rx="1" /></Line></IconButton>
              <IconButton $w={46} $h={28} aria-label="关闭"><Line w={10} c="#000" d="M0 0l10 10M10 0 0 10" /></IconButton>
            </Captions>
          </TitleBar>

          <NavBar>
            <NavButtons>
              <IconButton $w={48} $h={32} aria-label="后退"><Line w={12} d="M12 6H0M5.500.5 0 6l5.500 5.500" /></IconButton>
              <IconButton $w={48} $h={32} aria-label="前进"><Line w={12} c="#a3aaa7" d="M0 6h12M6.500.5 12 6 6.500 11.500" /></IconButton>
              <IconButton $w={48} $h={32} aria-label="上移"><Line w={12} d="M6 12V0M.5 5.500 6 0l5.500 5.500" /></IconButton>
              <IconButton $w={48} $h={32} aria-label="刷新"><Line w={12} d="M11.500 5A5.700 5.700 0 1 1 9.500 1.500L11.500 3.500M11.500 0v3.500H8" /></IconButton>
            </NavButtons>
            <Address>
              <Crumb>
                <Line w={16} c="#5a5f5d" sw={1.300}>
                  <rect x="1" y="1" width="14" height="11" rx="2" />
                  <path d="M6 12.500v2.500M10 12.500v2.500M3.500 15h9" />
                </Line>
                <CrumbArrow><Chevron /></CrumbArrow>
              </Crumb>
              {crumbs.map((c) => (
                <Crumb key={c.text}>
                  <CrumbLink href="#" $cjk={c.cjk}>{c.text}</CrumbLink>
                  <CrumbArrow><Chevron /></CrumbArrow>
                </Crumb>
              ))}
            </Address>
            <SearchField>
              <SearchInput type="text" aria-label="搜索" placeholder="在 2026HIEX & HI Roster File 中搜索" />
              <Line w={16} c="#444" sw={1.100}><circle cx="6.500" cy="6.500" r="3.800" /><path d="m9.500 9.500 4 4" /></Line>
            </SearchField>
          </NavBar>

          <Toolbar>
            <ToolGroup $pad="0 17px 0 2px">
              <ToolButton $menu>
                <Line w={16} c="#555"><circle cx="8" cy="8" r="7.300" /><path stroke="#0078d4" d="M8 5v6M5 8h6" /></Line>
                <ToolText>新建</ToolText>
                <SmallDown />
              </ToolButton>
            </ToolGroup>
            <ToolGroup $pad="0 18px 0 18px" $gap={32}>
              {disabledTools.map(([label, icon]) => (
                <ToolButton key={label} aria-label={label} disabled>{icon}</ToolButton>
              ))}
            </ToolGroup>
            <ToolGroup $pad="0 16px" $gap={29}>
              <ToolButton $menu>
                <Line w={16} c="#555"><path d="M4.500 14V2M.5 6l4-4 4 4" /><path stroke="#0078d4" d="M11.500 2v12M7.500 10l4 4 4-4" /></Line>
                <ToolText>排序</ToolText>
                <SmallDown />
              </ToolButton>
              <ToolButton $menu>
                <Line w={16} c="#555" d="M0 3.500h16M0 6.500h16M0 9.500h16M0 12.500h16" />
                <ToolText>查看</ToolText>
                <SmallDown />
              </ToolButton>
            </ToolGroup>
            <ToolGroup $pad="0 16px" $last>
              <ToolButton aria-label="查看更多">
                <Svg width="16" height="16" viewBox="0 0 16 16" fill="#222"><circle cx="1.700" cy="8.500" r="1.500" /><circle cx="8" cy="8.500" r="1.500" /><circle cx="14.300" cy="8.500" r="1.500" /></Svg>
              </ToolButton>
            </ToolGroup>
            <ToolSpacer />
            <ToolButton>
              <Line w={16} c="#555"><path d="M9.500 2.500H3Q.5 2.500.5 5v6q0 2.500 2.500 2.500H9.500" /><path stroke="#0078d4" d="M9.500 2.500H13q2.500 0 2.500 2.500v6q0 2.500-2.500 2.500H9.500ZM11.500 6h2M11.500 8h2M11.500 10h2" /></Line>
              详细信息
            </ToolButton>
          </Toolbar>

          <Content>
            <Sidebar>
              <ul><Tree items={quickItems} /></ul>
              <TreeRule />
              <ul><Tree items={treeItems} /></ul>
            </Sidebar>
            <FileArea>
              <Table>
                <THead>
                  <HeadRow>
                    <HeadCell $first>名称<SortMark><Line w={10} h={6} c="#666" d="M1.500 4.500 5 1l3.500 3.500" /></SortMark></HeadCell>
                    <HeadCell>修改日期</HeadCell>
                    <HeadCell>类型</HeadCell>
                    <HeadCell>大小</HeadCell>
                  </HeadRow>
                </THead>
                <TBody>
                  {files.map((f) => (
                    <FileRow key={f.name} $focused={f.focused}>
                      <NameCell $cjk={f.cjk}>{f.icon}{f.name}</NameCell>
                      <Cell>{f.date}</Cell>
                      <Cell>{f.type}</Cell>
                      <Cell $right>{f.size}</Cell>
                    </FileRow>
                  ))}
                </TBody>
              </Table>
            </FileArea>
          </Content>

          <StatusBar>
            <StatusText>2 个项目</StatusText>
            <ToolSpacer />
            <ViewButton $on aria-label="详细信息视图"><Line w={14} h={12} c="#444" d="M1 1.500h12M1 4.500h12M1 7.500h12M1 10.500h12" /></ViewButton>
            <ViewButton aria-label="大图标视图"><Line w={12} c="#444" d="M.5.5h11v8H.5ZM.5 11.500h11" /></ViewButton>
          </StatusBar>
        </Window>
      </Stage>

      <Taskbar>
        <Weather>
          <WeatherIcon />
          <Stacked>13°C<Muted>多云</Muted></Stacked>
        </Weather>
        <Apps>
          <TaskButton aria-label="开始"><StartIcon /></TaskButton>
          <TaskSearch>
            <Line w={16} c="#222" sw={1.700}><circle cx="7" cy="7" r="5.500" /><path d="m11 11 4 4" /></Line>
            <TaskSearchInput type="text" aria-label="搜索" placeholder="搜索" />
            <Food />
          </TaskSearch>
          {apps.map(([label, icon, state]) => (
            <TaskButton key={label} aria-label={label} $active={state === "active"} $running={state === "running"}>{icon}</TaskButton>
          ))}
        </Apps>
        <Tray>
          <TrayButton $w={32} aria-label="显示隐藏的图标"><Chevron dir="up" c="#1d2a25" sw={1.400} /></TrayButton>
          <TrayButton $w={32} aria-label="更新">
            <Line w={16} c="#1d2a25" sw={1.300}>
              <path d="M1 6.500A7 7 0 0 1 14.500 5.500M14.800 1.500v4h-4M6 14.500Q2.500 13.500 1.500 11.500M1.200 15v-4h4" />
              <circle cx="12" cy="12" r="4" fill="#0078d4" stroke="none" />
            </Line>
          </TrayButton>
          <TrayButton $w={32}>中</TrayButton>
          <TrayButton $w={44}>拼</TrayButton>
          <TrayButton $w={54} aria-label="网络和音量">
            <Line w={16} c="#1d2a25" sw={1.200}>
              <path d="M10 1.500H2.500Q1 1.500 1 3v8q0 1.500 1.500 1.500h9Q13 12.500 13 11V8M7 12.500v3M4 15.500h6M12 1h3.500v4H12ZM13.700 5v3" />
            </Line>
            <Line w={16} c="#1d2a25" sw={1.200}>
              <path d="M1 6h2.500L7 2.500v11L3.500 10H1ZM9.500 6q1.500 2 0 4M11.500 4q3 4 0 8M13.500 2q4.500 6 0 12" />
            </Line>
          </TrayButton>
          <Clock><Stacked>17:03<span>2025/12/15</span></Stacked></Clock>
        </Tray>
      </Taskbar>
    </Desktop>
  );
}
